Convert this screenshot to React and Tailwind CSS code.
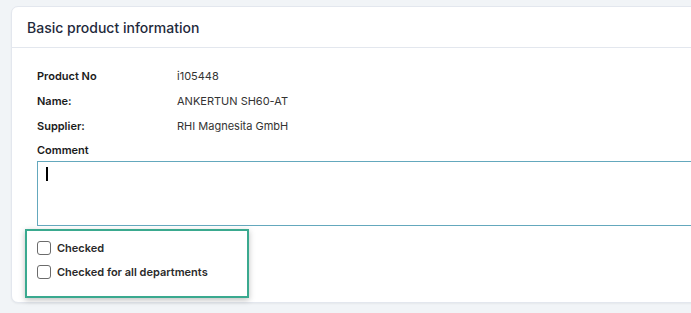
export default function App() {
  const rows = [
    { label: "Product No", value: "i105448" },
    { label: "Name:", value: "ANKERTUN SH60-AT" },
    { label: "Supplier:", value: "RHI Magnesita GmbH" },
  ];

  return (
    <div
      className="w-[691px] h-[313px] overflow-hidden bg-[#f1f4f7] pt-[6px] pl-[11px]"
      style={{ fontFamily: "Inter, 'Liberation Sans', sans-serif" }}
    >
      <div className="w-[700px] h-[297px] bg-white rounded-tl-[7px] rounded-bl-[7px] border border-[#e3e7ee] shadow-[0_1px_2px_rgba(0,0,0,0.05)]">
        <div className="h-[41px] border-b border-[#e3e7ee] pl-[15px] flex items-center">
          <h2 className="text-[14px] font-medium text-[#1f2a3c]">Basic product information</h2>
        </div>
        <div className="pl-[25px] pt-[16px]">
          {rows.map((row) => (
            <div key={row.label} className="flex items-center h-[25px]">
              <span className="w-[140px] text-[11px] font-semibold text-[#1b1b1b]">{row.label}</span>
              <span className="text-[11px] text-[#333]">{row.value}</span>
            </div>
          ))}
          <div className="text-[11px] font-semibold text-[#1b1b1b] h-[22px] flex items-center">Comment</div>
          <div className="h-[65px] border border-[#64a8bd] relative">
            <div className="absolute left-[8px] top-[5px] w-[2px] h-[14px] bg-black" />
          </div>
        </div>
        <div className="ml-[13px] mt-[3px] w-[224px] h-[69px] border-2 border-[#3aa98f] shadow-[0_2px_6px_rgba(0,0,0,0.25)] pl-[10px] pt-[10px] flex flex-col gap-[10px]">
          {["Checked", "Checked for all departments"].map((label) => (
            <label key={label} className="flex items-center gap-[6px] h-[14px]">
              <span className="w-[14px] h-[14px] border border-[#6b6b6b] rounded-[3px] bg-white" />
              <span className="text-[11px] leading-[14px] font-semibold text-[#2a2a2a]">{label}</span>
            </label>
          ))}
        </div>
      </div>
    </div>
  );
}
